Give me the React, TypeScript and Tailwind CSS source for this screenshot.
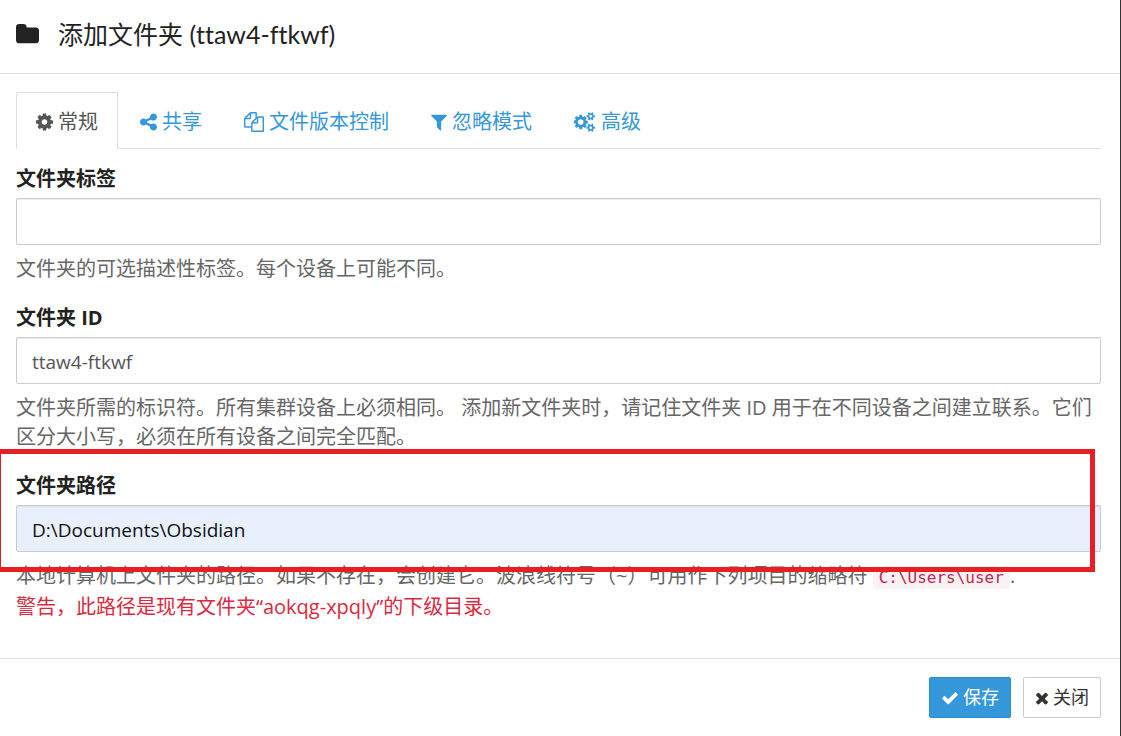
import type { ReactNode } from "react";

type IconDef = { viewBox: string; size: string; path: string };

const icons = {
  folder: {
    viewBox: "64 0 1664 1792",
    size: "h-[25px] w-[23px]",
    path: "M1728 608v704q0 92-66 158t-158 66h-1216q-92 0-158-66t-66-158v-960q0-92 66-158t158-66h320q92 0 158 66t66 158v32h672q92 0 158 66t66 158z",
  },
  cog: {
    viewBox: "128 0 1536 1792",
    size: "h-5 w-[17px]",
    path: "M1152 896q0-106-75-181t-181-75-181 75-75 181 75 181 181 75 181-75 75-181zm512-109v222q0 12-8 23t-20 13l-185 28q-19 54-39 91 35 50 107 138 10 12 10 25t-9 23q-27 37-99 108t-94 71q-12 0-26-9l-138-108q-44 23-91 38-16 136-29 186-7 28-36 28h-222q-14 0-24.5-8.5t-11.5-21.5l-28-184q-49-16-90-37l-141 107q-10 9-25 9-14 0-25-11-126-114-165-168-7-10-7-23 0-12 8-23 15-21 51-66.5t54-70.5q-27-50-41-99l-183-27q-13-2-21-12.5t-8-23.5v-222q0-12 8-23t19-13l186-28q14-46 39-92-40-57-107-138-10-12-10-24 0-10 9-23 26-36 98.5-107.5t94.5-71.5q13 0 26 10l138 107q44-23 91-38 16-136 29-186 7-28 36-28h222q14 0 24.5 8.5t11.5 21.5l28 184q49 16 90 37l142-107q9-9 24-9 13 0 25 10 129 119 165 170 7 8 7 22 0 12-8 23-15 21-51 66.5t-54 70.5q26 50 41 98l183 28q13 2 21 12.5t8 23.5z",
  },
  share: {
    viewBox: "128 0 1536 1792",
    size: "h-5 w-[17px]",
    path: "M1344 1024q133 0 226.5 93.5t93.5 226.5-93.5 226.5-226.5 93.5-226.5-93.5-93.5-226.5q0-12 2-34l-360-180q-92 86-218 86-133 0-226.5-93.5t-93.5-226.5 93.5-226.5 226.5-93.5q126 0 218 86l360-180q-2-22-2-34 0-133 93.5-226.5t226.5-93.5 226.5 93.5 93.5 226.5-93.5 226.5-226.5 93.5q-126 0-218-86l-360 180q2 22 2 34t-2 34l360 180q92-86 218-86z",
  },
  files: {
    viewBox: "0 0 1792 1792",
    size: "h-5 w-5",
    path: "M1696 384q40 0 68 28t28 68v1216q0 40-28 68t-68 28h-960q-40 0-68-28t-28-68v-288h-544q-40 0-68-28t-28-68v-672q0-40 20-88t48-76l408-408q28-28 76-48t88-20h416q40 0 68 28t28 68v328q68-40 128-40h416zm-544 213l-299 299h299v-299zm-640-384l-299 299h299v-299zm196 647l316-316v-416h-384v416q0 40-28 68t-68 28h-416v640h512v-256q0-40 20-88t48-76zm956 804v-1152h-384v416q0 40-28 68t-68 28h-416v640h896z",
  },
  filter: {
    viewBox: "192 0 1408 1792",
    size: "h-5 w-4",
    path: "M1595 295q17 41-14 70l-493 493v742q0 42-39 59-13 5-25 5-27 0-45-19l-256-256q-19-19-19-45v-486l-493-493q-31-29-14-70 17-39 59-39h1280q42 0 59 39z",
  },
  cogs: {
    viewBox: "0 0 1920 1792",
    size: "h-5 w-[22px]",
    path: "M832 896q0-106-75-181t-181-75-181 75-75 181 75 181 181 75 181-75 75-181zm768 512q0-52-38-90t-90-38-90 38-38 90q0 53 37.5 90.5t90.5 37.5 90.5-37.5 37.5-90.5zm0-1024q0-52-38-90t-90-38-90 38-38 90q0 53 37.5 90.5t90.5 37.5 90.5-37.5 37.5-90.5zm-384 421v185q0 10-7 19.5t-16 10.5l-155 24q-11 35-32 76 34 48 90 115 7 11 7 20 0 12-7 19-23 30-82.5 89.5t-78.5 59.5q-11 0-21-7l-115-90q-37 19-77 31-11 108-23 155-7 24-30 24h-186q-11 0-20-7.5t-10-17.5l-23-153q-34-10-75-31l-118 89q-7 7-20 7-11 0-21-8-144-133-144-160 0-9 7-19 10-14 41-53t47-61q-23-44-35-82l-152-24q-10-1-17-9.5t-7-19.5v-185q0-10 7-19.5t16-10.5l155-24q11-35 32-76-34-48-90-115-7-11-7-20 0-12 7-20 22-30 82-89t79-59q11 0 21 7l115 90q34-18 77-32 11-108 23-154 7-24 30-24h186q11 0 20 7.5t10 17.5l23 153q34 10 75 31l118-89q8-7 20-7 11 0 21 8 144 133 144 160 0 8-7 19-12 16-42 54t-45 60q23 48 34 82l152 23q10 2 17 10.5t7 19.5zm640 533v140q0 16-149 31-12 27-30 52 51 113 51 138 0 4-4 7-122 71-124 71-8 0-46-47t-52-68q-20 2-30 2t-30-2q-14 21-52 68t-46 47q-2 0-124-71-4-3-4-7 0-25 51-138-18-25-30-52-149-15-149-31v-140q0-16 149-31 13-29 30-52-51-113-51-138 0-4 4-7 4-2 35-20t59-34 30-16q8 0 46 46.5t52 67.5q20-2 30-2t30 2q51-71 92-112l6-2q4 0 124 70 4 3 4 7 0 25-51 138 17 23 30 52 149 15 149 31zm0-1024v140q0 16-149 31-12 27-30 52 51 113 51 138 0 4-4 7-122 71-124 71-8 0-46-47t-52-68q-20 2-30 2t-30-2q-14 21-52 68t-46 47q-2 0-124-71-4-3-4-7 0-25 51-138-18-25-30-52-149-15-149-31v-140q0-16 149-31 13-29 30-52-51-113-51-138 0-4 4-7 4-2 35-20t59-34 30-16q8 0 46 46.5t52 67.5q20-2 30-2t30 2q51-71 92-112l6-2q4 0 124 70 4 3 4 7 0 25-51 138 17 23 30 52 149 15 149 31z",
  },
  check: {
    viewBox: "0 0 1792 1792",
    size: "size-[18px]",
    path: "M1671 566q0 40-28 68l-724 724-136 136q-28 28-68 28t-68-28l-136-136-362-362q-28-28-28-68t28-68l136-136q28-28 68-28t68 28l294 295 656-657q28-28 68-28t68 28l136 136q28 28 28 68z",
  },
  times: {
    viewBox: "192 0 1408 1792",
    size: "h-[18px] w-[14px]",
    path: "M1490 1322q0 40-28 68l-136 136q-28 28-68 28t-68-28l-294-294-294 294q-28 28-68 28t-68-28l-136-136q-28-28-28-68t28-68l294-294-294-294q-28-28-28-68t28-68l136-136q28-28 68-28t68 28l294 294 294-294q28-28 68-28t68 28l136 136q28 28 28 68t-28 68l-294 294 294 294q28 28 28 68z",
  },
} satisfies Record<string, IconDef>;

type IconName = keyof typeof icons;

function Icon({ name }: { name: IconName }) {
  const icon = icons[name];
  return (
    <svg viewBox={icon.viewBox} className={`shrink-0 fill-current ${icon.size}`} aria-hidden="true">
      <path d={icon.path} />
    </svg>
  );
}

const tabs: { icon: IconName; label: string; active?: boolean }[] = [
  { icon: "cog", label: "常规", active: true },
  { icon: "share", label: "共享" },
  { icon: "files", label: "文件版本控制" },
  { icon: "filter", label: "忽略模式" },
  { icon: "cogs", label: "高级" },
];

function Tabs() {
  return (
    <nav className="flex gap-0.5 border-b border-[#ddd]">
      {tabs.map((tab) => (
        <a
          key={tab.label}
          href="#"
          aria-current={tab.active ? "page" : undefined}
          className={`-mb-px flex items-center gap-[5px] rounded-t-xs border px-[19px] pt-[14px] pb-[11px] leading-[30px] ${
            tab.active
              ? "border-[#ddd] border-b-white bg-white text-[#555]"
              : "border-transparent text-[#3498db]"
          }`}
        >
          <Icon name={tab.icon} />
          {tab.label}
        </a>
      ))}
    </nav>
  );
}

function Field({
  id,
  label,
  value,
  filled,
  highlighted,
  children,
}: {
  id: string;
  label: string;
  value?: string;
  filled?: boolean;
  highlighted?: boolean;
  children: ReactNode;
}) {
  return (
    <div className="relative mb-5">
      <label htmlFor={id} className="mb-[5px] block font-bold text-[#222]">
        {label}
      </label>
      <input
        id={id}
        type="text"
        defaultValue={value}
        className={`block h-[47px] w-full rounded-xs border border-[#ccc] px-[15px] pt-0.5 text-[19px] shadow-[inset_0_1px_1px_rgba(0,0,0,0.075)] ${
          filled ? "bg-[#e8f0fe] text-[#111]" : "bg-white text-[#555]"
        }`}
      />
      <div className="mt-[9px] text-[#666]">{children}</div>
      {highlighted && (
        <div className="pointer-events-none absolute -top-[22px] right-1.5 -left-4 h-[123px] border-5 border-l border-[#e81e25]" />
      )}
    </div>
  );
}

export default function App() {
  return (
    <main className="flex min-h-screen flex-col border-r border-[#333] bg-white font-['Open_Sans','Noto_Sans_CJK_SC',sans-serif] text-[20px] leading-[29px]">
      <header className="flex items-center gap-[19px] border-b border-[#e0e0e0] px-4 pt-[19px] pb-6 text-[#222]">
        <Icon name="folder" />
        <h1 className="font-['Lato','Noto_Sans_CJK_SC',sans-serif] text-[25px] leading-[30px] [font-variant-ligatures:none]">
          添加文件夹 (ttaw4-ftkwf)
        </h1>
      </header>

      <form className="grow px-4 pt-[18px] pr-[19px]">
        <Tabs />
        <div className="pt-[15px]">
          <Field id="folder-label" label="文件夹标签">
            <p>文件夹的可选描述性标签。每个设备上可能不同。</p>
          </Field>
          <Field id="folder-id" label="文件夹 ID" value="ttaw4-ftkwf">
            <p>
              文件夹所需的标识符。所有集群设备上必须相同。 添加新文件夹时，请记住文件夹 ID
              用于在不同设备之间建立联系。它们区分大小写，必须在所有设备之间完全匹配。
            </p>
          </Field>
          <Field id="folder-path" label="文件夹路径" value="D:\Documents\Obsidian" filled highlighted>
            <p>
              本地计算机上文件夹的路径。如果不存在，会创建它。波浪线符号（~）可用作下列项目的缩略符{" "}
              <code className="rounded-xs bg-[#f9f2f4] px-1.5 py-0.5 font-['DejaVu_Sans_Mono',monospace] text-[16px] text-[#c7254e]">
                C:\Users\user
              </code>
              .
            </p>
            <p className="text-[#dc2840]">警告，此路径是现有文件夹“aokqg-xpqly”的下级目录。</p>
          </Field>
        </div>
      </form>

      <footer className="flex justify-end gap-3 border-t border-[#e0e0e0] py-[18px] pr-[19px] pl-4 text-[18px] leading-[27px]">
        <button
          type="button"
          className="flex items-center gap-1 rounded-xs border border-[#258cd1] bg-[#3498db] px-[11px] py-1.5 text-white"
        >
          <Icon name="check" />
          保存
        </button>
        <button
          type="button"
          className="flex items-center gap-1 rounded-xs border border-[#ccc] bg-white px-[11px] py-1.5 text-[#333]"
        >
          <Icon name="times" />
          关闭
        </button>
      </footer>
    </main>
  );
}
